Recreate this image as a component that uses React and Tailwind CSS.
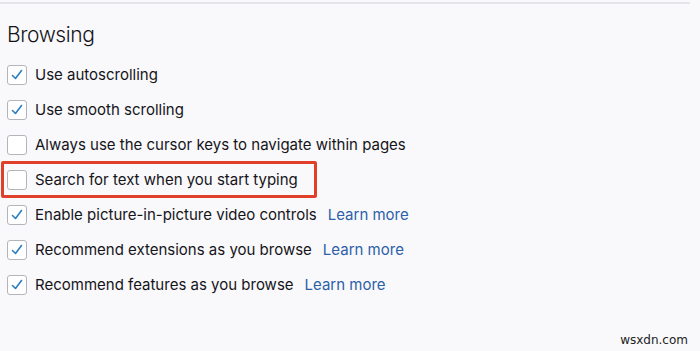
import { useState } from 'react'

const options = [
  { id: 'autoscroll', label: 'Use autoscrolling', checked: true },
  { id: 'smooth', label: 'Use smooth scrolling', checked: true },
  { id: 'caret', label: 'Always use the cursor keys to navigate within pages', checked: false },
  { id: 'find', label: 'Search for text when you start typing', checked: false, highlight: true },
  { id: 'pip', label: 'Enable picture-in-picture video controls', checked: true, learn: true },
  { id: 'cfrAddons', label: 'Recommend extensions as you browse', checked: true, learn: true },
  { id: 'cfrFeatures', label: 'Recommend features as you browse', checked: true, learn: true },
]

function Checkbox({ checked, onChange }) {
  return (
    <button onClick={onChange}
      className="w-5 h-5 shrink-0 rounded-[3px] border border-[#b4b4bc] bg-white flex items-center justify-center">
      {checked && (
        <svg width="14" height="14" viewBox="0 0 14 14" fill="none">
          <path d="M2.5 7.5 L5.5 10.5 L11.5 2.5" stroke="#2b7fc0" strokeWidth="1.6" strokeLinecap="round" strokeLinejoin="round" />
        </svg>
      )}
    </button>
  )
}

export default function App() {
  const [state, setState] = useState(() => Object.fromEntries(options.map(o => [o.id, o.checked])))

  const toggle = (id) => setState(s => ({ ...s, [id]: !s[id] }))

  return (
    <div className="w-[700px] h-[351px] bg-[#f9f9fb] relative overflow-hidden text-[#15141a]"
      style={{ fontFamily: 'Inter, "Noto Sans", sans-serif' }}>
      {/* separador superior */}
      <div className="mt-[2px] w-[690px] h-[2px] bg-[#e4e4ea]" />

      <h1 className="ml-[7px] mt-[16px] text-[21px] leading-[30px] font-light tracking-[-0.02em]">Browsing</h1>

      <div className="mt-[7px] flex flex-col">
        {options.map(o => (
          <div key={o.id} className="h-[35px] flex items-center">
            <div className={
              o.highlight
                ? 'flex items-center h-[37px] pl-[3px] pr-[16px] ml-[1px] border-[3px] border-[#e0402a] rounded-[2px]'
                : 'flex items-center ml-[7px]'
            }>
              <Checkbox checked={state[o.id]} onChange={() => toggle(o.id)} />
              <span className="ml-[8px] text-[15px] leading-5">{o.label}</span>
            </div>
            {o.learn && (
              <a href="#" className="ml-[11px] text-[15px] leading-5 text-[#2c5fa8]">Learn more</a>
            )}
          </div>
        ))}
      </div>

      <span className="absolute right-[12px] bottom-[2px] text-[12px] text-[#222]"
        style={{ fontFamily: '"DejaVu Sans", sans-serif' }}>wsxdn.com</span>
    </div>
  )
}
